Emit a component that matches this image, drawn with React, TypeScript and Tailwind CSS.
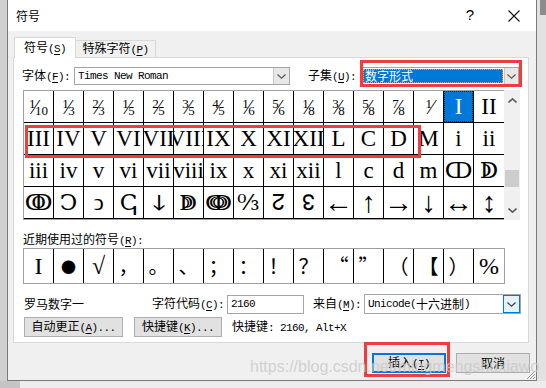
import React from "react";

const ui = "font-['Noto_Sans_CJK_SC',sans-serif]";
const mono = "font-['Liberation_Mono',monospace] text-[11px] tracking-[-0.6px]";
const serif = "font-['Liberation_Serif','DejaVu_Serif','DejaVu_Sans',serif]";

function Key({ zh, k, colon = true, dots = false }: { zh: string; k: string; colon?: boolean; dots?: boolean }) {
  return (
    <span className="whitespace-nowrap">
      {zh}
      <span className={mono}>
        (<span className="underline underline-offset-[2px]">{k}</span>)
        {colon ? ":" : ""}
        {dots ? "..." : ""}
      </span>
    </span>
  );
}

function Chev({ up = false, c = "#5a5a5a", w = 1.2 }: { up?: boolean; c?: string; w?: number }) {
  return (
    <svg width="9" height="5" viewBox="0 0 9 5">
      <polyline
        points={up ? "0.5,4.5 4.5,0.8 8.5,4.5" : "0.5,0.5 4.5,4.2 8.5,0.5"}
        fill="none"
        stroke={c}
        strokeWidth={w}
      />
    </svg>
  );
}

function Frac({ n, d }: { n: string; d: string }) {
  return (
    <span className="inline-flex h-[20px] items-stretch">
      <span className="self-start text-[13px] leading-none">{n}</span>
      <span className="text-[20px] leading-none -mx-[2px]">⁄</span>
      <span className="self-end text-[13px] leading-none">{d}</span>
    </span>
  );
}

const fracs: [string, string][] = [
  ["1", "10"], ["1", "3"], ["2", "3"], ["1", "5"], ["2", "5"], ["3", "5"], ["4", "5"],
  ["1", "6"], ["5", "6"], ["1", "8"], ["3", "8"], ["5", "8"], ["7", "8"], ["1", ""],
];
const row2 = ["III", "IV", "V", "VI", "VII", "VIII", "IX", "X", "XI", "XII", "L", "C", "D", "M", "i", "ii"];
const row3 = ["iii", "iv", "v", "vi", "vii", "viii", "ix", "x", "xi", "xii", "l", "c", "d", "m", "ↀ", "ↁ"];
const row4 = ["ↂ", "Ↄ", "ↄ", "ↅ", "ↆ", "ↇ", "ↈ", "↉", "↊", "↋", "←", "↑", "→", "↓", "↔", "↕"];
const arrows = "←↑→↓↔↕";

const recent: { t: string; f: string }[] = [
  { t: "I", f: `${serif} text-[24px]` },
  { t: "●", f: `${ui} text-[15px]` },
  { t: "√", f: `${serif} text-[24px]` },
  { t: "，", f: `${ui} text-[20px]` },
  { t: "。", f: `${ui} text-[20px]` },
  { t: "、", f: `${ui} text-[20px]` },
  { t: "；", f: `${ui} text-[20px]` },
  { t: "：", f: `${ui} text-[20px]` },
  { t: "！", f: `${ui} text-[20px]` },
  { t: "？", f: `${ui} text-[20px]` },
  { t: "“", f: `${ui} text-[20px]` },
  { t: "”", f: `${ui} text-[20px]` },
  { t: "（", f: `${ui} text-[20px]` },
  { t: "【", f: `${ui} text-[20px]` },
  { t: "）", f: `${ui} text-[20px]` },
  { t: "%", f: `${serif} text-[24px]` },
];

function Cell({ children, last }: { children: React.ReactNode; last: boolean }) {
  return (
    <div
      className={`relative flex items-center justify-center overflow-hidden whitespace-nowrap border-b border-black ${
        last ? "" : "border-r"
      }`}
    >
      {children}
    </div>
  );
}

export default function App() {
  return (
    <div className={`relative w-[546px] h-[388px] overflow-hidden bg-[#ececec] text-black text-[12px] ${ui}`}>
      <div className="flex h-[381px]">
        <div className="w-[7px] bg-[#d0d0d0]" />
        <div className="w-[530px] flex flex-col border-x border-b border-[#7a7a7a] bg-[#f0f0f0]">
          {/* title bar */}
          <div className="h-[31px] shrink-0 bg-white flex items-center">
            <span className="ml-[8px]">符号</span>
            <span className="ml-auto w-[44px] text-center text-[15px] font-['Liberation_Sans',sans-serif]">?</span>
            <span className="w-[44px] flex justify-center">
              <svg width="12" height="12" viewBox="0 0 12 12">
                <path d="M0.5 0.5L11.5 11.5M11.5 0.5L0.5 11.5" stroke="#111" strokeWidth="1.1" />
              </svg>
            </span>
          </div>

          {/* tabs */}
          <div className="flex pl-[6px] h-[26px] items-end">
            <div className="relative z-10 -mb-px w-[62px] h-[21px] bg-white border-x border-t border-[#d9d9d9] flex items-center justify-center">
              <Key zh="符号" k="S" colon={false} />
            </div>
            <div className="w-[80px] h-[17px] border-r border-t border-[#d9d9d9] bg-[#f0f0f0] flex items-center justify-center">
              <Key zh="特殊字符" k="P" colon={false} />
            </div>
          </div>

          {/* panel */}
          <div className="ml-[5px] w-[516px] h-[286px] shrink-0 bg-white border border-[#d9d9d9] flex flex-col">
            <div className="mt-[9px] h-[18px] flex items-center pl-[8px]">
              <div className="w-[52px]">
                <Key zh="字体" k="F" />
              </div>
              <div className="w-[216px] h-[18px] border border-[#a5a5a5] flex">
                <div className={`flex-1 pl-[3px] flex items-center ${mono}`}>Times New Roman</div>
                <div className="w-[16px] bg-[#e8e8e8] border-l border-[#c8c8c8] flex items-center justify-center">
                  <Chev />
                </div>
              </div>
              <div className="ml-[18px] w-[53px]">
                <Key zh="子集" k="U" />
              </div>
              <div className="w-[158px] h-[18px] border border-[#a5a5a5] flex bg-white">
                <div className="flex-1 p-[1px] flex">
                  <div className="flex-1 bg-[#0078d7] text-white border border-dotted border-[#e8a060] flex items-center pl-[1px] leading-none">
                    数字形式
                  </div>
                </div>
                <div className="w-[14px] bg-[#e8e8e8] border-l border-[#c8c8c8] flex items-center justify-center">
                  <Chev />
                </div>
              </div>
            </div>

            {/* symbol grid */}
            <div className="mt-[5px] ml-[9px] flex">
              <div
                className={`w-[481px] grid grid-cols-[repeat(16,30px)] grid-rows-[repeat(4,32px)] border-l border-t border-b border-[#a0a0a0] ${serif}`}
              >
                {fracs.map(([n, d], i) => (
                  <Cell key={"f" + i} last={false}>
                    <Frac n={n} d={d} />
                  </Cell>
                ))}
                <Cell last={false}>
                  <div className="absolute inset-0 bg-[#0078d7] border border-dotted border-[#202020]" />
                  <span className="relative text-white text-[23px] leading-none">I</span>
                </Cell>
                <Cell last={true}>
                  <span className="text-[23px] leading-none">II</span>
                </Cell>
                {[row2, row3, row4].map((row, r) =>
                  row.map((t, i) => (
                    <Cell key={r + "-" + i} last={i === 15}>
                      <span className={arrows.includes(t) ? "text-[29px] leading-none" : "text-[23px] leading-none"}>
                        {t}
                      </span>
                    </Cell>
                  ))
                )}
              </div>
              {/* scrollbar */}
              <div className="w-[16px] h-[130px] bg-[#f0f0f0] flex flex-col items-center">
                <div className="mt-[8px]">
                  <Chev up c="#606060" w={1.6} />
                </div>
                <div className="mt-[67px] w-[14px] h-[17px] bg-[#cdcdcd]" />
                <div className="mt-auto mb-[7px]">
                  <Chev c="#606060" w={1.6} />
                </div>
              </div>
            </div>

            <div className="mt-[11px] h-[16px] leading-[16px] pl-[9px]">
              <Key zh="近期使用过的符号" k="R" />
            </div>
            <div className="mt-[1px] ml-[9px] w-[482px] h-[36px] border border-[#a0a0a0] flex">
              {recent.map((s, i) => (
                <div
                  key={i}
                  className={`w-[30px] flex items-center justify-center leading-none ${s.f} ${
                    i < 15 ? "border-r border-black" : ""
                  }`}
                >
                  {s.t}
                </div>
              ))}
            </div>

            {/* code row */}
            <div className="mt-[10px] h-[20px] flex items-center pl-[10px]">
              <div className="w-[128px]">罗马数字一</div>
              <div className="w-[75px]">
                <Key zh="字符代码" k="C" />
              </div>
              <div className={`w-[77px] h-[19px] border border-[#a5a5a5] flex items-center pl-[3px] ${mono}`}>2160</div>
              <div className="ml-[9px] w-[51px]">
                <Key zh="来自" k="M" />
              </div>
              <div className="w-[157px] h-[20px] border border-[#a5a5a5] flex">
                <div className="flex-1 pl-[3px] flex items-center whitespace-nowrap">
                  <span className={mono}>Unicode(</span>十六进制<span className={mono}>)</span>
                </div>
                <div className="w-[17px] bg-[#e5f1fb] border border-[#0078d7] flex items-center justify-center">
                  <Chev c="#404040" />
                </div>
              </div>
            </div>

            {/* buttons row */}
            <div className="mt-[3px] h-[20px] flex items-center pl-[10px]">
              <div className="w-[99px] h-[20px] bg-[#e1e1e1] border border-[#adadad] flex items-center justify-center">
                <Key zh="自动更正" k="A" colon={false} dots />
              </div>
              <div className="ml-[11px] w-[88px] h-[20px] bg-[#e1e1e1] border border-[#adadad] flex items-center justify-center">
                <Key zh="快捷键" k="K" colon={false} dots />
              </div>
              <div className="ml-[10px] whitespace-nowrap">
                快捷键<span className={mono}>: 2160, Alt+X</span>
              </div>
            </div>
          </div>

          {/* dialog buttons */}
          <div className="mt-[10px] h-[20px] flex justify-end gap-[10px] pr-[6px]">
            <div className="w-[74px] h-[20px] bg-[#e1e1e1] border-2 border-[#0078d7] flex items-center justify-center">
              <Key zh="插入" k="I" colon={false} />
            </div>
            <div className="w-[74px] h-[20px] bg-[#e1e1e1] border border-[#adadad] flex items-center justify-center">
              取消
            </div>
          </div>
        </div>
        <div className="flex-1 bg-[#e2e2e2] flex flex-col items-end">
          <div className="w-[6px] h-[15px] bg-[#8c8c8c]" />
        </div>
      </div>
      <div className="flex h-[7px]">
        <div className="w-[20px] bg-[#c4c4c4]" />
        <div className="flex-1 bg-[#ededed]" />
      </div>

      {/* annotation boxes */}
      <div className="absolute left-[360px] top-[60px] w-[162px] h-[27px] border-[3px] border-[#f03c3c]" />
      <div className="absolute left-[25px] top-[125px] w-[396px] h-[33px] border-[3px] border-[#f03c3c]" />
      <div className="absolute left-[364px] top-[342px] w-[86px] h-[35px] border-[3px] border-[#f03c3c]" />

      {/* resize grip */}
      <svg className="absolute left-[526px] top-[370px]" width="10" height="10" viewBox="0 0 10 10">
        <path d="M9 1L1 9M9 4L4 9M9 7L7 9" stroke="#9a9a9a" strokeWidth="1" />
      </svg>

      {/* watermark */}
      <div className="absolute left-[250px] top-[357px] whitespace-nowrap text-[16px] leading-[20px] text-[#c8c8c8]/80 font-['Liberation_Sans',sans-serif]">
        https://blog.csdn.net/mingmengshuxiawo
      </div>
    </div>
  );
}
